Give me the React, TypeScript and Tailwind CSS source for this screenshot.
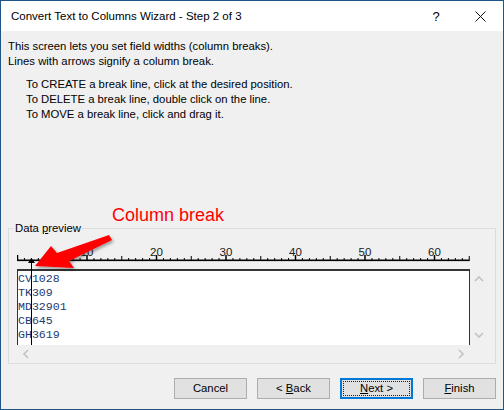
import React from 'react';

const SANS = { fontFamily: '"Liberation Sans", Arial, sans-serif' };
const MONO = { fontFamily: '"Liberation Mono", "Courier New", monospace' };

const STEP = 6.95;
const COLS = 65;
const ROWS = ['CV1028', 'TK309', 'MD32901', 'CB645', 'GH3619'];

function Ruler() {
  const ticks = [];
  for (let i = 0; i <= COLS; i++) {
    const x = 0.5 + i * STEP;
    const h = i % 10 === 0 ? 5 : i % 5 === 0 ? 4 : 2;
    ticks.push(
      <line
        key={i}
        x1={x}
        x2={x}
        y1={16}
        y2={16 - h}
        stroke="#000"
        strokeWidth={i % 10 === 0 ? 1.5 : 1}
      />
    );
  }
  const labels = [10, 20, 30, 40, 50, 60];
  return (
    <svg width={460} height={25} className="block">
      {ticks}
      <rect x={0} y={15.5} width={COLS * STEP + 1} height={1.6} fill="#000" />
      {labels.map((n) => (
        <text
          key={n}
          x={0.5 + n * STEP}
          y={12}
          textAnchor="middle"
          fontSize={11.5}
          fill="#1a1a1a"
          style={SANS}
        >
          {n}
        </text>
      ))}
    </svg>
  );
}

function Chevron({ dir }: { dir: 'up' | 'down' | 'left' | 'right' }) {
  const d = {
    up: 'M1,6 L5,2 L9,6',
    down: 'M1,2 L5,6 L9,2',
    left: 'M6,1 L2,5 L6,9',
    right: 'M2,1 L6,5 L2,9',
  }[dir];
  const w = dir === 'up' || dir === 'down' ? 10 : 8;
  const h = dir === 'up' || dir === 'down' ? 8 : 10;
  return (
    <svg width={w} height={h} className="block">
      <path d={d} fill="none" stroke="#c2c2c2" strokeWidth={1.6} />
    </svg>
  );
}

function Btn({
  children,
  focused,
}: {
  children: React.ReactNode;
  focused?: boolean;
}) {
  return (
    <button
      className={
        'relative w-[73px] h-[21px] bg-[#e1e1e1] text-[11.3px] text-black flex items-center justify-center ' +
        (focused ? 'border-2 border-[#0078d7]' : 'border border-[#adadad]')
      }
      style={SANS}
    >
      {focused && (
        <span className="absolute inset-[1px] border border-dotted border-[#222]" />
      )}
      <span className="relative">{children}</span>
    </button>
  );
}

export default function App() {
  return (
    <div
      className="relative w-[504px] h-[410px] border border-[#1f5486] bg-[#f0f0f0] flex flex-col overflow-hidden text-black"
      style={SANS}
    >
      {/* Title bar */}
      <div className="h-[30px] bg-white flex items-center shrink-0 pt-[1px]">
        <div className="flex-1 pl-[10px] text-[11.5px]">
          Convert Text to Columns Wizard - Step 2 of 3
        </div>
        <div className="w-[42px] h-full flex items-center justify-center text-[13px]">
          ?
        </div>
        <div className="w-[46px] h-full flex items-center justify-center">
          <svg width={11} height={11}>
            <path d="M0.5,0.5 L10.5,10.5 M10.5,0.5 L0.5,10.5" stroke="#111" strokeWidth={1} />
          </svg>
        </div>
      </div>

      {/* Body */}
      <div className="flex-1 flex flex-col px-[7px] pt-[8px] pb-[10px]">
        <div className="text-[11.3px] leading-[15px]">
          <div>This screen lets you set field widths (column breaks).</div>
          <div>Lines with arrows signify a column break.</div>
          <div className="mt-[8px] pl-[18px]">
            <div>To CREATE a break line, click at the desired position.</div>
            <div>To DELETE a break line, double click on the line.</div>
            <div>To MOVE a break line, click and drag it.</div>
          </div>
        </div>

        {/* Data preview group */}
        <div className="relative mt-auto h-[136px] border border-[#dcdcdc] pl-[8px] pt-[15px]">
          <div className="absolute -top-[8px] left-[5px] bg-[#f0f0f0] px-[1px] text-[11.3px] leading-[15px]">
            Data <span className="underline">p</span>review
          </div>
          <Ruler />
          <div className="flex">
            <div className="relative w-[453px] h-[76px] bg-white border-t-2 border-l border-r border-[#333] pt-[1px] overflow-hidden">
              {ROWS.map((r) => (
                <div key={r} className="text-[11.6px] leading-[14px] text-[#253a70]" style={MONO}>
                  {r}
                </div>
              ))}
            </div>
            <div className="w-[17px] h-[76px] flex flex-col items-center justify-between py-[6px]">
              <Chevron dir="up" />
              <Chevron dir="down" />
            </div>
          </div>
          <div className="w-[453px] h-[17px] flex items-center justify-between px-[5px]">
            <Chevron dir="left" />
            <Chevron dir="right" />
          </div>

          {/* Column break marker */}
          <div className="absolute left-[22px] top-[30px] w-[1px] h-[86px] bg-black" />
          <svg width={7} height={5} className="absolute left-[19px] top-[29px]">
            <path d="M3.5,0 L7,5 L0,5 Z" fill="#000" />
          </svg>
        </div>

        {/* Buttons */}
        <div className="flex justify-end gap-[10px] mt-[14px]">
          <Btn>Cancel</Btn>
          <Btn>
            &lt; <span className="underline">B</span>ack
          </Btn>
          <Btn focused>
            <span className="underline">N</span>ext &gt;
          </Btn>
          <Btn>
            <span className="underline">F</span>inish
          </Btn>
        </div>
      </div>

      {/* Annotation */}
      <div className="absolute left-[111px] top-[205px] text-[18px] leading-none text-[#ff0000]" style={SANS}>
        Column break
      </div>
      <svg width={504} height={410} className="absolute left-0 top-0 pointer-events-none" style={{ marginLeft: -1, marginTop: -1 }}>
        <defs>
          <filter id="sh" x="-20%" y="-20%" width="140%" height="160%">
            <feDropShadow dx={1.5} dy={2} stdDeviation={1.5} floodColor="#000" floodOpacity={0.35} />
          </filter>
        </defs>
        <path
          d="M35,266 L51,246 L57,253 L109,235 L112,240 L69,261 L74,268 Z"
          fill="#ff0000"
          filter="url(#sh)"
        />
      </svg>
    </div>
  );
}
